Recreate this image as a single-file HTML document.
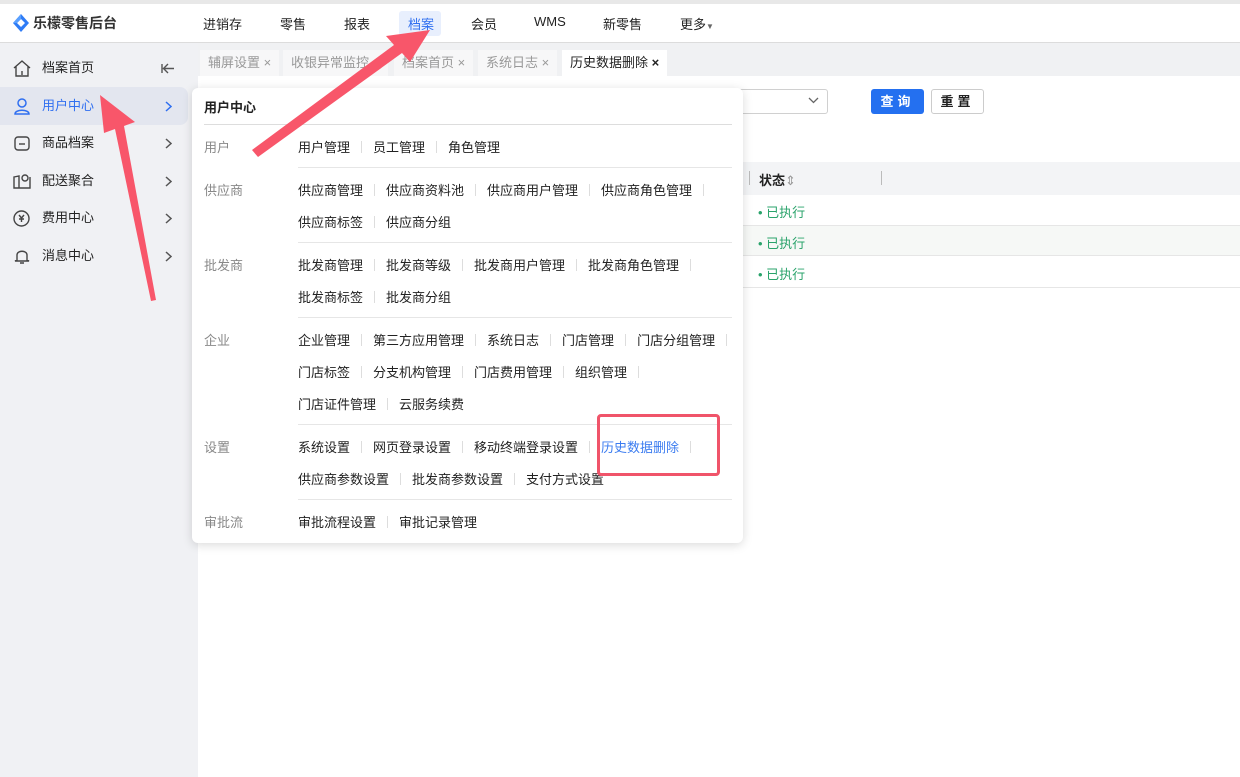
<!DOCTYPE html>
<html><head><meta charset="utf-8"><style>
*{margin:0;padding:0;box-sizing:border-box}
body{width:1240px;height:777px;overflow:hidden;position:relative;background:#fff;font-family:"Liberation Sans","Noto Sans CJK SC",sans-serif;font-size:13px;color:#222}
.a{position:absolute;white-space:nowrap}
.top{position:absolute;left:0;top:0;width:1240px;height:43px;background:#fff;border-top:4px solid #e8e8e8;border-bottom:1px solid #dcdcdc}
.side{position:absolute;left:0;top:43px;width:198px;height:734px;background:#f0f1f4}
.tabs{position:absolute;left:198px;top:43px;width:1042px;height:33px;background:#f0f1f3}
.tab{position:absolute;top:50px;height:26px;background:#f7f7f8;color:#999;padding:0 8px;line-height:26px;font-size:13px}
.nav{font-size:13px;top:14px}
.si{position:absolute;left:0;width:188px;height:38px;line-height:38px;font-size:13px;color:#222}
.si span{position:absolute;left:42px}
.si svg.c{position:absolute;left:165px;top:14px}
.panel{position:absolute;left:192px;top:88px;width:551px;height:455px;background:#fff;border-radius:6px;box-shadow:0 2px 10px rgba(0,0,0,.15)}
.lb{position:absolute;left:12px;color:#888;font-size:13px}
.row{position:absolute;left:106px;white-space:nowrap;font-size:13px;color:#222;display:flex;align-items:center}
.s{display:inline-block;width:1px;height:12px;background:#ddd;margin:0 11px}
.hl{position:absolute;left:106px;width:434px;height:1px;background:#e6e6e6}
.g{color:#2aa36b}
</style></head><body>
<div class="top"></div>
<svg class="a" style="left:13px;top:14px" width="16" height="18" viewBox="0 0 16 18"><path d="M8 0 L16 9 L8 18 L0 9Z" fill="#2f7cf6"/><path d="M8 5 L12 9 L8 13 L4 9Z" fill="#fff"/><path d="M8 0 L8 5 L4 9 L0 9Z" fill="#5aa0ff"/></svg>
<div class="a" style="left:33px;top:13px;font-size:14px;font-weight:bold;color:#333">乐檬零售后台</div>
<div class="a nav" style="left:203px">进销存</div>
<div class="a nav" style="left:280px">零售</div>
<div class="a nav" style="left:344px">报表</div>
<div class="a" style="left:399px;top:11px;width:42px;height:25px;background:#e8effd;border-radius:3px"></div>
<div class="a nav" style="left:408px;color:#2f6ff0">档案</div>
<div class="a nav" style="left:471px">会员</div>
<div class="a nav" style="left:534px">WMS</div>
<div class="a nav" style="left:603px">新零售</div>
<div class="a nav" style="left:680px">更多<span style="font-size:8px;color:#666">▼</span></div>

<div class="side"></div>
<div class="si" style="top:49px"><svg class="a" style="left:13px;top:11px" width="18" height="17" viewBox="0 0 18 17" fill="none" stroke="#444" stroke-width="1.4"><path d="M1 8 L9 1 L17 8 M3 6 V16 H15 V6 M9 11 V15"/></svg><span>档案首页</span><svg class="c" style="left:161px" width="14" height="11" viewBox="0 0 14 11" fill="none" stroke="#555" stroke-width="1.4"><path d="M13 5.5 H3 M7 1 L2.5 5.5 L7 10 M1 1 V10"/></svg></div>
<div class="si" style="top:87px;background:#e3e6ef;border-radius:0 8px 8px 0;color:#2f6ff0"><svg class="a" style="left:14px;top:11px" width="16" height="17" viewBox="0 0 16 17" fill="none" stroke="#2f6ff0" stroke-width="1.5"><circle cx="8" cy="5" r="4"/><path d="M1 16 C1 11 15 11 15 16 Z"/></svg><span>用户中心</span><svg class="c" width="7" height="11" viewBox="0 0 7 11" fill="none" stroke="#2f6ff0" stroke-width="1.5"><path d="M1 1 L6 5.5 L1 10"/></svg></div>
<div class="si" style="top:124px"><svg class="a" style="left:14px;top:12px" width="16" height="15" viewBox="0 0 16 15" fill="none" stroke="#444" stroke-width="1.4"><rect x="1" y="1" width="14" height="13" rx="3"/><path d="M5 8 H11"/></svg><span>商品档案</span><svg class="c" width="7" height="11" viewBox="0 0 7 11" fill="none" stroke="#555" stroke-width="1.5"><path d="M1 1 L6 5.5 L1 10"/></svg></div>
<div class="si" style="top:162px"><svg class="a" style="left:13px;top:11px" width="18" height="16" viewBox="0 0 18 16" fill="none" stroke="#444" stroke-width="1.4"><path d="M1 4 L6 3 L6 15 L1 15Z M6 15 L17 15 L17 4"/><circle cx="12" cy="5" r="3"/></svg><span>配送聚合</span><svg class="c" width="7" height="11" viewBox="0 0 7 11" fill="none" stroke="#555" stroke-width="1.5"><path d="M1 1 L6 5.5 L1 10"/></svg></div>
<div class="si" style="top:199px"><svg class="a" style="left:13px;top:11px" width="17" height="17" viewBox="0 0 17 17" fill="none" stroke="#444" stroke-width="1.4"><circle cx="8.5" cy="8.5" r="7.5"/><path d="M6 5 L8.5 8 L11 5 M8.5 8 V12 M6 9 H11"/></svg><span>费用中心</span><svg class="c" width="7" height="11" viewBox="0 0 7 11" fill="none" stroke="#555" stroke-width="1.5"><path d="M1 1 L6 5.5 L1 10"/></svg></div>
<div class="si" style="top:237px"><svg class="a" style="left:14px;top:11px" width="16" height="17" viewBox="0 0 16 17" fill="none" stroke="#444" stroke-width="1.4"><path d="M3 12 V7 C3 2 13 2 13 7 V12 L15 13 H1 Z M6 15 H10"/></svg><span>消息中心</span><svg class="c" width="7" height="11" viewBox="0 0 7 11" fill="none" stroke="#555" stroke-width="1.5"><path d="M1 1 L6 5.5 L1 10"/></svg></div>

<div class="tabs"></div>
<div class="tab" style="left:200px">辅屏设置 ×</div>
<div class="tab" style="left:283px">收银异常监控 ×</div>
<div class="tab" style="left:394px">档案首页 ×</div>
<div class="tab" style="left:478px">系统日志 ×</div>
<div class="tab" style="left:562px;background:#fff;color:#222">历史数据删除 <b>×</b></div>

<div class="a" style="left:700px;top:89px;width:128px;height:25px;border:1px solid #d0d0d0;border-radius:3px"></div>
<svg class="a" style="left:808px;top:97px" width="11" height="7" viewBox="0 0 11 7" fill="none" stroke="#666" stroke-width="1.3"><path d="M1 1 L5.5 5.5 L10 1"/></svg>
<div class="a" style="left:871px;top:89px;width:53px;height:25px;background:#2470f0;border-radius:3px;color:#fff;text-align:center;line-height:25px;font-weight:bold;letter-spacing:4px">查询</div>
<div class="a" style="left:931px;top:89px;width:53px;height:25px;border:1px solid #ccc;border-radius:3px;text-align:center;line-height:23px;font-weight:bold;letter-spacing:4px">重置</div>

<div class="a" style="left:198px;top:162px;width:1042px;height:33px;background:#f3f4f6"></div>
<div class="a" style="left:749px;top:171px;width:1px;height:14px;background:#bbb"></div>
<div class="a" style="left:881px;top:171px;width:1px;height:14px;background:#bbb"></div>
<div class="a" style="left:759px;top:170px;font-weight:bold">状态<span style="color:#999;font-weight:normal">⇕</span></div>
<div class="a" style="left:198px;top:225px;width:1042px;height:31px;background:#f6f8f6;border-top:1px solid #e6e6e6;border-bottom:1px solid #e6e6e6"></div>
<div class="a" style="left:198px;top:287px;width:1042px;height:1px;background:#e6e6e6"></div>
<div class="a g" style="left:758px;top:202px">• 已执行</div>
<div class="a g" style="left:758px;top:233px">• 已执行</div>
<div class="a g" style="left:758px;top:264px">• 已执行</div>

<div class="panel">
<div class="a" style="left:12px;top:9px;font-weight:bold;font-size:13px">用户中心</div>
<div class="a" style="left:12px;top:36px;width:528px;height:1px;background:#ddd"></div>
<div class="lb" style="top:49px">用户</div>
<div class="row" style="top:49px">用户管理<i class="s"></i>员工管理<i class="s"></i>角色管理</div>
<div class="hl" style="top:79px"></div>
<div class="lb" style="top:92px">供应商</div>
<div class="row" style="top:92px">供应商管理<i class="s"></i>供应商资料池<i class="s"></i>供应商用户管理<i class="s"></i>供应商角色管理<i class="s"></i></div>
<div class="row" style="top:124px">供应商标签<i class="s"></i>供应商分组</div>
<div class="hl" style="top:154px"></div>
<div class="lb" style="top:167px">批发商</div>
<div class="row" style="top:167px">批发商管理<i class="s"></i>批发商等级<i class="s"></i>批发商用户管理<i class="s"></i>批发商角色管理<i class="s"></i></div>
<div class="row" style="top:199px">批发商标签<i class="s"></i>批发商分组</div>
<div class="hl" style="top:229px"></div>
<div class="lb" style="top:242px">企业</div>
<div class="row" style="top:242px">企业管理<i class="s"></i>第三方应用管理<i class="s"></i>系统日志<i class="s"></i>门店管理<i class="s"></i>门店分组管理<i class="s"></i></div>
<div class="row" style="top:274px">门店标签<i class="s"></i>分支机构管理<i class="s"></i>门店费用管理<i class="s"></i>组织管理<i class="s"></i></div>
<div class="row" style="top:306px">门店证件管理<i class="s"></i>云服务续费</div>
<div class="hl" style="top:336px"></div>
<div class="lb" style="top:349px">设置</div>
<div class="row" style="top:349px">系统设置<i class="s"></i>网页登录设置<i class="s"></i>移动终端登录设置<i class="s"></i><span style="color:#3b7cf0">历史数据删除</span><i class="s"></i></div>
<div class="row" style="top:381px">供应商参数设置<i class="s"></i>批发商参数设置<i class="s"></i>支付方式设置</div>
<div class="hl" style="top:411px"></div>
<div class="lb" style="top:424px">审批流</div>
<div class="row" style="top:424px">审批流程设置<i class="s"></i>审批记录管理</div>
</div>

<div class="a" style="left:597px;top:414px;width:123px;height:62px;border:3px solid #f0546a;border-radius:4px"></div>

<svg class="a" style="left:0;top:0" width="1240" height="777">
<polygon points="430,30 410,62 402,53 258,157 252,150 394,45 386,36" fill="#f8566a"/>
<polygon points="100,95 135,122 124,126 156,300 151,301 115,129 104,133" fill="#f8566a"/>
</svg>
</body></html>
